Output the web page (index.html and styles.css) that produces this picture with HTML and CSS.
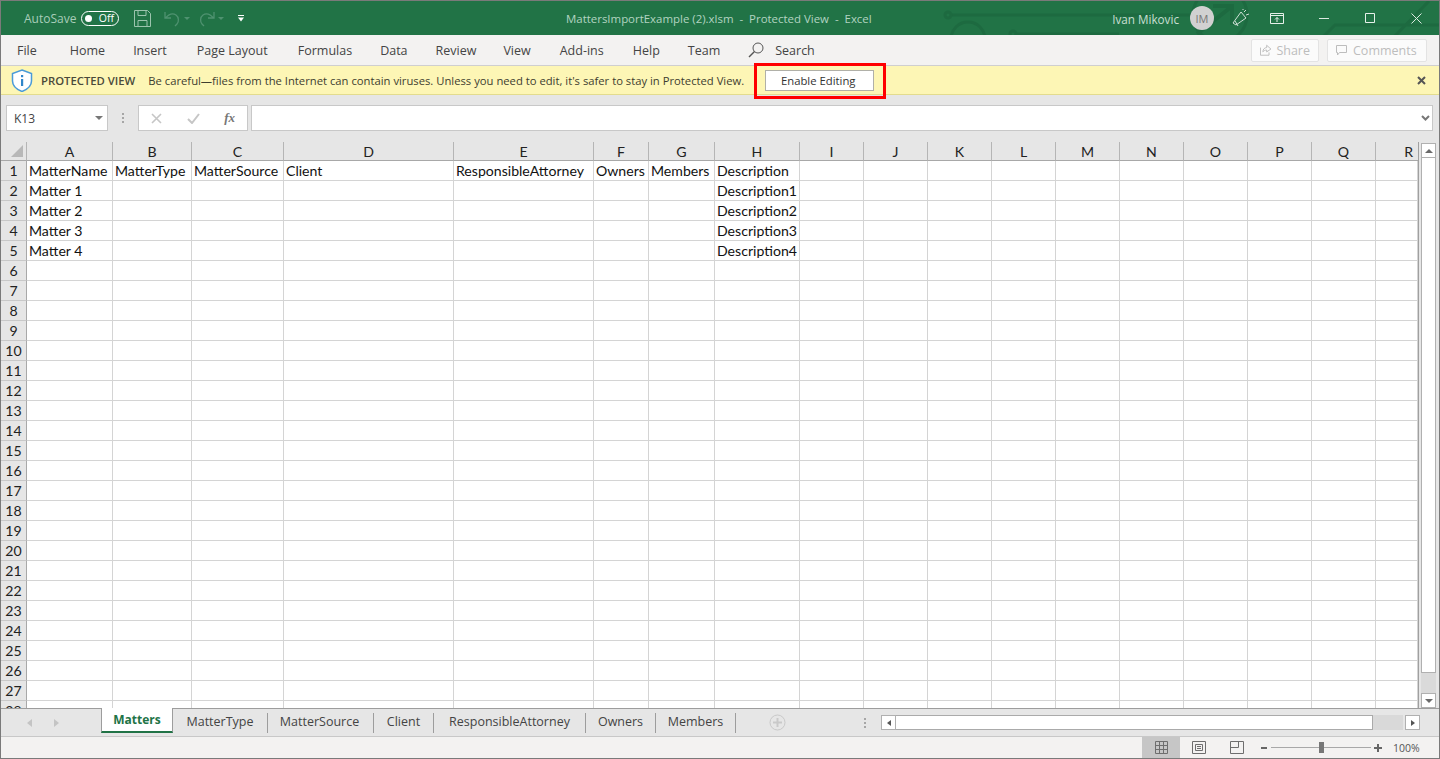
FILE: index.html
```html
<!DOCTYPE html>
<html lang="en">
<head>
<meta charset="utf-8">
<title>MattersImportExample (2).xlsm - Protected View - Excel</title>
<link rel="stylesheet" href="styles.css">
</head>
<body>
<div class="window">
  <header class="titlebar">
    <svg class="circuit" width="500" height="34" viewBox="0 0 500 34" fill="none" stroke="#1d6a40" stroke-width="3">
      <path d="M11 14H252"/><circle cx="9" cy="14" r="3"/>
      <circle cx="29" cy="38" r="17"/>
      <circle cx="74" cy="33" r="3"/><path d="M76 33H180"/>
      <circle cx="281" cy="14" r="27"/><path d="M258 33L292 6M274 5h19v19" stroke-width="4"/>
      <path d="M384 36l12-12h104M455 36L490 0"/>
    </svg>
    <div class="qat">
      <span class="autosave">AutoSave</span>
      <span class="toggle"><i class="knob"></i><b>Off</b></span>
      <svg class="ico-save" width="17" height="17" viewBox="0 0 17 17" fill="none" stroke="#9cc4ae"><path d="M.5.5h13l3 3v13H.5z"/><path d="M4 .5v5h8v-5M4 16.5v-6h9v6"/></svg>
      <svg class="ico-undo" width="17" height="17" viewBox="0 0 17 17" fill="none" stroke="#4f9270" stroke-width="1.3"><path d="M1 2v6h6M1.5 8C5 4 9 3 12 5s3 7 1 9l-2 2"/></svg>
      <span class="caret"></span>
      <svg class="ico-redo" width="17" height="17" viewBox="0 0 17 17" fill="none" stroke="#4f9270" stroke-width="1.3"><path d="M16 2v6h-6M15.500 8C12 4 8 3 5 5s-3 7-1 9l2 2"/></svg>
      <span class="caret"></span>
      <svg class="ico-more" width="6" height="7" viewBox="0 0 6 7" fill="#fff"><path d="M0 0h6v1H0zM0 2.500h6L3 6.500z"/></svg>
    </div>
    <div class="doc-title">MattersImportExample (2).xlsm&nbsp; -&nbsp; Protected View&nbsp; -&nbsp; Excel</div>
    <div class="win-right">
      <span class="user">Ivan Mikovic</span>
      <span class="avatar">IM</span>
      <svg class="ico-wand" width="17" height="18" viewBox="0 0 17 18" fill="none" stroke="#cfe0d6"><path d="M1 14L9 3l5 6-10 7z"/><path d="M3 12l3 5M12 3l2-2M14 6l3-1M11 1v-1"/></svg>
      <svg class="ico-ribbon" width="14" height="11" viewBox="0 0 14 11" fill="none" stroke="#e6f0ea"><path d="M.5.5h13v10H.5zM.5 2.500h13M7 9V4.500M5 6.500l2-2 2 2"/></svg>
      <svg class="ico-min" width="10" height="10" viewBox="0 0 10 10" stroke="#dce9e1"><path d="M0 5.500h10"/></svg>
      <svg class="ico-max" width="10" height="10" viewBox="0 0 10 10" fill="none" stroke="#e6f0ea"><path d="M.5.500h9v9h-9z"/></svg>
      <svg class="ico-close" width="11" height="11" viewBox="0 0 11 11" stroke="#dce9e1"><path d="M.5.500l10 10M10.500.500l-10 10"/></svg>
    </div>
  </header>

  <nav class="ribbon">
    <span class="tab t-file">File</span>
    <span class="tab t-home">Home</span>
    <span class="tab t-insert">Insert</span>
    <span class="tab t-layout">Page Layout</span>
    <span class="tab t-formulas">Formulas</span>
    <span class="tab t-data">Data</span>
    <span class="tab t-review">Review</span>
    <span class="tab t-view">View</span>
    <span class="tab t-addins">Add-ins</span>
    <span class="tab t-help">Help</span>
    <span class="tab t-team">Team</span>
    <svg class="ico-search" width="16" height="16" viewBox="0 0 16 16" fill="none" stroke="#555"><circle cx="10" cy="6" r="5"/><path d="M6.500 9.500L1 15" stroke-width="1.400"/></svg>
    <span class="tab t-search">Search</span>
    <span class="spacer"></span>
    <button class="rb-btn b-share"><svg width="12" height="12" viewBox="0 0 12 12" fill="none" stroke="#bdbdbd"><path d="M.5 3.500v8h9v-3M3 8c0-3 2-4.500 4-4.500V1l4.500 4L7 8V6C5 6 4 7 3 8z"/></svg>Share</button>
    <button class="rb-btn b-comments"><svg width="12" height="12" viewBox="0 0 12 12" fill="none" stroke="#bdbdbd"><path d="M.5 1.500h10v7h-7l-2 2.500v-2.500h-1z"/></svg>Comments</button>
  </nav>

  <section class="msgbar">
    <svg class="ico-shield" width="22" height="23" viewBox="0 0 22 23"><path d="M11 1l9.500 3.500V12c0 5-4.500 8.500-9.500 10.500C6 20.500 1.500 17 1.500 12V4.500z" fill="#fff" stroke="#4a9bd8" stroke-width="1.500"/><rect x="10" y="10" width="2.200" height="7" fill="#2f86c9"/><rect x="10" y="6" width="2.200" height="2.200" fill="#2f86c9"/></svg>
    <strong class="msg-head">PROTECTED VIEW</strong>
    <span class="msg-text">Be careful—files from the Internet can contain viruses. Unless you need to edit, it's safer to stay in Protected View.</span>
    <span class="enable-wrap"><button class="enable">Enable Editing</button></span>
    <span class="spacer"></span>
    <svg class="msg-close" width="9" height="9" viewBox="0 0 9 9" stroke="#555" stroke-width="2"><path d="M1 1l7 7M8 1l-7 7"/></svg>
  </section>

  <section class="formula">
    <div class="namebox"><span>K13</span><i class="nb-caret"></i></div>
    <div class="fdots"><i></i><i></i><i></i></div>
    <div class="fbtns">
      <svg width="11" height="11" viewBox="0 0 11 11" stroke="#c6c6c6" stroke-width="1.600"><path d="M1 1l9 9M10 1l-9 9"/></svg>
      <svg width="13" height="11" viewBox="0 0 13 11" fill="none" stroke="#c6c6c6" stroke-width="2"><path d="M1 6l4 4 7-9"/></svg>
      <em class="fx">fx</em>
    </div>
    <div class="finput"><svg width="9" height="6" viewBox="0 0 9 6" fill="none" stroke="#777" stroke-width="2"><path d="M1 1l3.500 3.500L8 1"/></svg></div>
  </section>

  <section class="sheet">
    <div class="gridwrap">
      <table class="grid">
        <colgroup>
          <col class="c0"><col class="ca"><col class="cb"><col class="cc"><col class="cd"><col class="ce"><col class="cf"><col class="cg"><col class="ch"><col class="c64"><col class="c64"><col class="c64"><col class="c64"><col class="c64"><col class="c64"><col class="c64"><col class="c64"><col class="c64"><col class="cr">
        </colgroup>
        <thead><tr><th class="corner"><i></i></th><th>A</th><th>B</th><th>C</th><th>D</th><th>E</th><th>F</th><th>G</th><th>H</th><th>I</th><th>J</th><th>K</th><th>L</th><th>M</th><th>N</th><th>O</th><th>P</th><th>Q</th><th class="last">R</th></tr></thead>
        <tbody>
          <tr><th>1</th><td>MatterName</td><td>MatterType</td><td>MatterSource</td><td>Client</td><td>ResponsibleAttorney</td><td>Owners</td><td>Members</td><td>Description</td><td></td><td></td><td></td><td></td><td></td><td></td><td></td><td></td><td></td><td></td></tr>
          <tr><th>2</th><td>Matter 1</td><td></td><td></td><td></td><td></td><td></td><td></td><td>Description1</td><td></td><td></td><td></td><td></td><td></td><td></td><td></td><td></td><td></td><td></td></tr>
          <tr><th>3</th><td>Matter 2</td><td></td><td></td><td></td><td></td><td></td><td></td><td>Description2</td><td></td><td></td><td></td><td></td><td></td><td></td><td></td><td></td><td></td><td></td></tr>
          <tr><th>4</th><td>Matter 3</td><td></td><td></td><td></td><td></td><td></td><td></td><td>Description3</td><td></td><td></td><td></td><td></td><td></td><td></td><td></td><td></td><td></td><td></td></tr>
          <tr><th>5</th><td>Matter 4</td><td></td><td></td><td></td><td></td><td></td><td></td><td>Description4</td><td></td><td></td><td></td><td></td><td></td><td></td><td></td><td></td><td></td><td></td></tr>
          <tr><th>6</th><td></td><td></td><td></td><td></td><td></td><td></td><td></td><td></td><td></td><td></td><td></td><td></td><td></td><td></td><td></td><td></td><td></td><td></td></tr>
          <tr><th>7</th><td></td><td></td><td></td><td></td><td></td><td></td><td></td><td></td><td></td><td></td><td></td><td></td><td></td><td></td><td></td><td></td><td></td><td></td></tr>
          <tr><th>8</th><td></td><td></td><td></td><td></td><td></td><td></td><td></td><td></td><td></td><td></td><td></td><td></td><td></td><td></td><td></td><td></td><td></td><td></td></tr>
          <tr><th>9</th><td></td><td></td><td></td><td></td><td></td><td></td><td></td><td></td><td></td><td></td><td></td><td></td><td></td><td></td><td></td><td></td><td></td><td></td></tr>
          <tr><th>10</th><td></td><td></td><td></td><td></td><td></td><td></td><td></td><td></td><td></td><td></td><td></td><td></td><td></td><td></td><td></td><td></td><td></td><td></td></tr>
          <tr><th>11</th><td></td><td></td><td></td><td></td><td></td><td></td><td></td><td></td><td></td><td></td><td></td><td></td><td></td><td></td><td></td><td></td><td></td><td></td></tr>
          <tr><th>12</th><td></td><td></td><td></td><td></td><td></td><td></td><td></td><td></td><td></td><td></td><td></td><td></td><td></td><td></td><td></td><td></td><td></td><td></td></tr>
          <tr><th>13</th><td></td><td></td><td></td><td></td><td></td><td></td><td></td><td></td><td></td><td></td><td></td><td></td><td></td><td></td><td></td><td></td><td></td><td></td></tr>
          <tr><th>14</th><td></td><td></td><td></td><td></td><td></td><td></td><td></td><td></td><td></td><td></td><td></td><td></td><td></td><td></td><td></td><td></td><td></td><td></td></tr>
          <tr><th>15</th><td></td><td></td><td></td><td></td><td></td><td></td><td></td><td></td><td></td><td></td><td></td><td></td><td></td><td></td><td></td><td></td><td></td><td></td></tr>
          <tr><th>16</th><td></td><td></td><td></td><td></td><td></td><td></td><td></td><td></td><td></td><td></td><td></td><td></td><td></td><td></td><td></td><td></td><td></td><td></td></tr>
          <tr><th>17</th><td></td><td></td><td></td><td></td><td></td><td></td><td></td><td></td><td></td><td></td><td></td><td></td><td></td><td></td><td></td><td></td><td></td><td></td></tr>
          <tr><th>18</th><td></td><td></td><td></td><td></td><td></td><td></td><td></td><td></td><td></td><td></td><td></td><td></td><td></td><td></td><td></td><td></td><td></td><td></td></tr>
          <tr><th>19</th><td></td><td></td><td></td><td></td><td></td><td></td><td></td><td></td><td></td><td></td><td></td><td></td><td></td><td></td><td></td><td></td><td></td><td></td></tr>
          <tr><th>20</th><td></td><td></td><td></td><td></td><td></td><td></td><td></td><td></td><td></td><td></td><td></td><td></td><td></td><td></td><td></td><td></td><td></td><td></td></tr>
          <tr><th>21</th><td></td><td></td><td></td><td></td><td></td><td></td><td></td><td></td><td></td><td></td><td></td><td></td><td></td><td></td><td></td><td></td><td></td><td></td></tr>
          <tr><th>22</th><td></td><td></td><td></td><td></td><td></td><td></td><td></td><td></td><td></td><td></td><td></td><td></td><td></td><td></td><td></td><td></td><td></td><td></td></tr>
          <tr><th>23</th><td></td><td></td><td></td><td></td><td></td><td></td><td></td><td></td><td></td><td></td><td></td><td></td><td></td><td></td><td></td><td></td><td></td><td></td></tr>
          <tr><th>24</th><td></td><td></td><td></td><td></td><td></td><td></td><td></td><td></td><td></td><td></td><td></td><td></td><td></td><td></td><td></td><td></td><td></td><td></td></tr>
          <tr><th>25</th><td></td><td></td><td></td><td></td><td></td><td></td><td></td><td></td><td></td><td></td><td></td><td></td><td></td><td></td><td></td><td></td><td></td><td></td></tr>
          <tr><th>26</th><td></td><td></td><td></td><td></td><td></td><td></td><td></td><td></td><td></td><td></td><td></td><td></td><td></td><td></td><td></td><td></td><td></td><td></td></tr>
          <tr><th>27</th><td></td><td></td><td></td><td></td><td></td><td></td><td></td><td></td><td></td><td></td><td></td><td></td><td></td><td></td><td></td><td></td><td></td><td></td></tr>
          <tr><th>28</th><td></td><td></td><td></td><td></td><td></td><td></td><td></td><td></td><td></td><td></td><td></td><td></td><td></td><td></td><td></td><td></td><td></td><td></td></tr>
        </tbody>
      </table>
    </div>
    <aside class="vscroll">
      <span class="sb-btn"><i class="arr-up"></i></span>
      <span class="sb-thumb"></span>
      <span class="sb-track"></span>
      <span class="sb-btn"><i class="arr-down"></i></span>
    </aside>
  </section>

  <section class="tabsbar">
    <div class="tab-nav"><i class="nav-l"></i><i class="nav-r"></i></div>
    <span class="sheet-tab active">Matters</span>
    <span class="sheet-tab st-type">MatterType</span>
    <span class="sheet-tab st-source">MatterSource</span>
    <span class="sheet-tab st-client">Client</span>
    <span class="sheet-tab st-resp">ResponsibleAttorney</span>
    <span class="sheet-tab st-owners">Owners</span>
    <span class="sheet-tab st-members">Members</span>
    <svg class="add-sheet" width="17" height="17" viewBox="0 0 17 17" fill="none" stroke="#c9c9c9"><circle cx="8.500" cy="8.500" r="7.500"/><path d="M8.500 4v9M4 8.500h9" stroke-width="2"/></svg>
    <div class="tdots"><i></i><i></i><i></i></div>
    <div class="hscroll">
      <span class="hb-btn"><i class="arr-left"></i></span>
      <span class="hb-thumb"></span>
      <span class="hb-track"></span>
      <span class="hb-btn"><i class="arr-right"></i></span>
    </div>
  </section>

  <footer class="status">
    <span class="view-btn active"><svg width="13" height="13" viewBox="0 0 13 13" fill="none" stroke="#6e6e6e"><path d="M.5.500h12v12H.5zM4.500.500v12M8.500.500v12M.5 4.500h12M.5 8.500h12"/></svg></span>
    <span class="view-btn"><svg width="14" height="13" viewBox="0 0 14 13" fill="none" stroke="#6e6e6e"><path d="M.5.500h13v12H.5zM3.500 3.500h7v6h-7zM5 5.500h4M5 7.500h4"/></svg></span>
    <span class="view-btn"><svg width="14" height="13" viewBox="0 0 14 13" fill="none" stroke="#6e6e6e"><path d="M.5.500h13v12H.5zM.5 6.500h8v-6"/></svg></span>
    <div class="zoom">
      <i class="z-minus"></i>
      <span class="z-line"><i class="z-thumb"></i></span>
      <i class="z-plus"></i>
      <span class="z-val">100%</span>
    </div>
  </footer>
</div>
</body>
</html>
```

FILE: styles.css
```css
* { box-sizing: border-box; }
html, body { margin: 0; padding: 0; height: 100%; overflow: hidden; }
body { font-family: "Open Sans", "Noto Sans", sans-serif; font-size: 12px; color: #444; }
i, em { font-style: normal; }
button { font: inherit; }
.spacer { flex: 1; }

.window { position: relative; width: 1440px; height: 759px; display: flex; flex-direction: column; background: #e6e6e6; border: 1px solid #7a7a7a; }

/* title bar */
.titlebar { position: relative; height: 34px; flex: none; background: #217346; display: flex; align-items: center; color: #fff; }
.circuit { position: absolute; right: 0; top: 0; }
.qat { position: relative; display: flex; align-items: center; padding-left: 23px; }
.autosave { color: #a8cdb9; font-size: 12px; width: 57px; }
.toggle { width: 38px; height: 15px; border: 1.500px solid #fff; border-radius: 8px; display: flex; align-items: center; justify-content: space-between; padding: 0 4px 0 3px; }
.knob { width: 7px; height: 7px; border-radius: 50%; background: #fff; }
.toggle b { font-weight: 400; font-size: 10.500px; line-height: 1; color: #fff; }
.ico-save { margin-left: 15px; }
.ico-undo { margin-left: 13px; }
.caret { width: 0; height: 0; border: 3px solid transparent; border-top: 3px solid #4f9270; border-bottom: 0; margin-left: 3px; }
.ico-redo { margin-left: 8px; }
.ico-more { margin-left: 14px; }
.doc-title { position: absolute; left: 565px; top: 9px; font-size: 11.450px; line-height: 17px; color: #b2d3c1; white-space: nowrap; }
.win-right { position: absolute; right: 0; top: 0; height: 34px; display: flex; align-items: center; }
.user { font-size: 11.700px; color: #c8dfd2; position: relative; top: 1px; }
.avatar { width: 24px; height: 24px; border-radius: 50%; background: #d1d1d1; color: #777; font-size: 11px; display: flex; align-items: center; justify-content: center; margin-left: 11px; }
.ico-wand { margin-left: 18px; }
.ico-ribbon { margin-left: 21px; }
.ico-min { margin-left: 35px; }
.ico-max { margin-left: 36px; }
.ico-close { margin-left: 36px; margin-right: 17px; }

/* ribbon tabs */
.ribbon { height: 31px; flex: none; background: #f3f2f1; display: flex; align-items: center; position: relative; border-bottom: 1px solid #cfcfcf; padding-right: 12px; }
.tab { font-size: 12.500px; color: #444; white-space: nowrap; }
.t-file { margin-left: 16px; }
.t-home { margin-left: 33px; }
.t-insert { margin-left: 28px; }
.t-layout { margin-left: 30px; }
.t-formulas { margin-left: 30px; }
.t-data { margin-left: 28px; }
.t-review { margin-left: 28px; }
.t-view { margin-left: 27px; }
.t-addins { margin-left: 29px; }
.t-help { margin-left: 29px; }
.t-team { margin-left: 28px; }
.ico-search { margin-left: 28px; }
.t-search { margin-left: 11px; }
.rb-btn { height: 23px; background: #fbfbfb; border: 1px solid #e3e3e3; border-radius: 2px; color: #bdbdbd; font-size: 12.500px; display: flex; align-items: center; gap: 5px; padding: 0 8px; margin: 0; }
.b-share { width: 68px; }
.b-comments { width: 100px; margin-left: 8px; }

/* message bar */
.msgbar { height: 29px; flex: none; background: #fdf6b5; border-bottom: 1px solid #e3dc8e; display: flex; align-items: center; padding-left: 10px; padding-right: 13px; }
.msg-head { font-weight: 600; font-size: 11.300px; color: #4a4a3a; margin-left: 8px; }
.msg-text { font-size: 11.250px; color: #3d3d30; margin-left: 13px; white-space: nowrap; }
.enable-wrap { margin-left: 21px; display: flex; position: relative; }
.enable-wrap::after { content: ""; position: absolute; left: -11px; right: -12px; top: -7px; bottom: -8px; border: 3px solid #ff0000; pointer-events: none; }
.enable { width: 109px; height: 21px; background: #fff; border: 1px solid #b0b0a8; color: #333; font-size: 11.300px; padding: 0 3px 0 0; }

/* formula bar */
.formula { height: 47px; flex: none; background: #e6e6e6; display: flex; align-items: flex-start; padding: 10px 6px 0 5px; }
.namebox { width: 102px; height: 26px; background: #fff; border: 1px solid #c8c8c8; display: flex; align-items: center; justify-content: space-between; padding: 0 4px 0 7px; color: #444; font-size: 12px; }
.nb-caret { width: 0; height: 0; border: 4px solid transparent; border-top: 4px solid #777; border-bottom: 0; }
.fdots { width: 30px; height: 26px; display: flex; flex-direction: column; align-items: center; justify-content: center; gap: 2px; }
.fdots i, .tdots i { width: 2px; height: 2px; background: #a6a6a6; }
.fbtns { width: 110px; height: 26px; background: #fff; border: 1px solid #c8c8c8; display: flex; align-items: center; justify-content: space-between; padding: 0 12px; }
.fx { font-family: "Liberation Serif", serif; font-style: italic; font-weight: 700; font-size: 13px; color: #777; }
.finput { flex: 1; height: 26px; margin-left: 3px; background: #fff; border: 1px solid #c8c8c8; display: flex; align-items: center; justify-content: flex-end; padding-right: 2px; }

/* sheet */
.sheet { height: 566px; flex: none; display: flex; overflow: hidden; background: #e6e6e6; }
.gridwrap { width: 1418px; flex: none; overflow: hidden; border-right: 1px solid #a0a0a0; }
.grid { border-collapse: separate; border-spacing: 0; table-layout: fixed; width: 1417px; font-family: Lato, "Liberation Sans", sans-serif; font-size: 14.100px; color: #111; }
.c0 { width: 26px; } .ca { width: 86px; } .cb { width: 79px; } .cc { width: 92px; } .cd { width: 170px; } .ce { width: 140px; } .cf { width: 55px; } .cg { width: 66px; } .ch { width: 85px; } .c64 { width: 64px; } .cr { width: 42px; }
.grid thead th { height: 19px; background: #e6e6e6; font-weight: 400; color: #222; border-right: 1px solid #b5b5b5; border-bottom: 1px solid #a8a8a8; padding: 1px 0 0; line-height: 17px; text-align: center; }
.grid thead th.last { border-right: 0; text-align: right; padding-right: 5px; }
.grid thead th.corner { position: relative; }
.corner i { position: absolute; right: 3px; bottom: 3px; width: 0; height: 0; border-style: solid; border-width: 0 0 12px 12px; border-color: transparent transparent #b8b8b8 transparent; }
.grid tbody th { height: 20px; background: #e6e6e6; font-weight: 400; color: #222; border-right: 1px solid #a8a8a8; border-bottom: 1px solid #c8c8c8; padding: 1px 0 0; text-align: center; line-height: 18px; }
.grid td { height: 20px; background: #fff; border-right: 1px solid #d4d4d4; border-bottom: 1px solid #d4d4d4; padding: 1px 0 0 2px; white-space: nowrap; overflow: hidden; line-height: 18px; }

.vscroll { width: 21px; flex: none; display: flex; flex-direction: column; padding: 1px 0 0 2px; background: #e6e6e6; }
.sb-btn { width: 15px; height: 15px; flex: none; background: #fff; border: 1px solid #b0b0b0; display: flex; align-items: center; justify-content: center; }
.arr-up { width: 0; height: 0; border: 4px solid transparent; border-bottom: 4px solid #6a6a6a; border-top: 0; }
.arr-down { width: 0; height: 0; border: 4px solid transparent; border-top: 4px solid #6a6a6a; border-bottom: 0; }
.sb-thumb { width: 15px; height: 515px; flex: none; background: #fff; border: 1px solid #b0b0b0; border-top: 0; }
.sb-track { flex: 1; background: #dadada; width: 15px; }

/* sheet tabs */
.tabsbar { height: 29px; flex: none; background: #e6e6e6; border-top: 1px solid #9d9d9d; border-bottom: 1px solid #c8c8c8; display: flex; align-items: center; position: relative; }
.tab-nav { width: 100px; height: 100%; display: flex; align-items: center; gap: 22px; padding-left: 26px; }
.nav-l { width: 0; height: 0; border: 4px solid transparent; border-right: 5px solid #c4c4c4; border-left: 0; }
.nav-r { width: 0; height: 0; border: 4px solid transparent; border-left: 5px solid #c4c4c4; border-right: 0; }
.sheet-tab { height: 20px; line-height: 18px; font-size: 12.500px; color: #444; text-align: center; border-right: 1px solid #9d9d9d; white-space: nowrap; flex: none; }
.sheet-tab.active { width: 72px; height: 25px; margin-top: -1px; align-self: flex-start; background: #fff; color: #217346; font-weight: 700; font-size: 12px; line-height: 24px; border-left: 1px solid #9d9d9d; border-right: 1px solid #9d9d9d; border-bottom: 2px solid #217346; }
.st-type { width: 95px; }
.st-source { width: 106px; padding-right: 2px; }
.st-client { width: 60px; }
.st-resp { width: 152px; }
.st-owners { width: 70px; }
.st-members { width: 80px; }
.add-sheet { margin-left: 33px; }
.tdots { display: flex; flex-direction: column; gap: 2px; margin-left: 78px; }
.hscroll { position: absolute; left: 880px; top: 6px; width: 539px; height: 16px; display: flex; }
.hb-btn { width: 15px; height: 15px; flex: none; background: #fff; border: 1px solid #b0b0b0; display: flex; align-items: center; justify-content: center; }
.arr-left { width: 0; height: 0; border: 3px solid transparent; border-right: 4px solid #555; border-left: 0; }
.arr-right { width: 0; height: 0; border: 3px solid transparent; border-left: 4px solid #555; border-right: 0; }
.hb-thumb { width: 477px; height: 15px; background: #fff; border: 1px solid #aaa; border-left: 0; }
.hb-track { width: 30px; height: 15px; background: #d9d9d9; margin-right: 2px; }

/* status bar */
.status { flex: 1; background: #f3f2f1; display: flex; align-items: stretch; justify-content: flex-start; padding-left: 1141px; }
.view-btn { width: 38px; display: flex; align-items: center; justify-content: center; }
.view-btn.active { background: #c6c6c6; }
.zoom { display: flex; align-items: center; margin-left: 5px; }
.z-minus { width: 6px; height: 2px; background: #666; }
.z-line { width: 100px; height: 1px; background: #a8a8a8; margin-left: 4px; position: relative; }
.z-thumb { position: absolute; left: 48px; top: -5px; width: 5px; height: 11px; background: #777; }
.z-plus { width: 8px; height: 8px; margin-left: 3px; background: linear-gradient(#666,#666) center/8px 2px no-repeat, linear-gradient(#666,#666) center/2px 8px no-repeat; }
.z-val { font-size: 10.500px; color: #555; margin-left: 11px; }
```
